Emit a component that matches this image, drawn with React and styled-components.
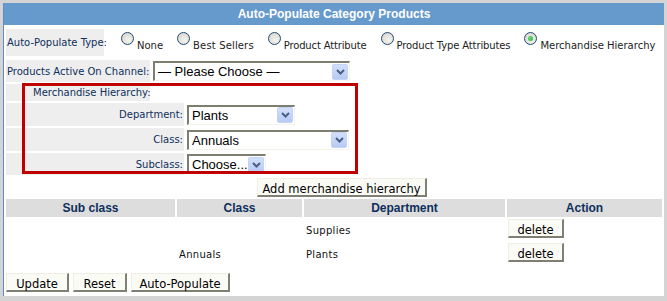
import React from "react";
import styled, { createGlobalStyle } from "styled-components";

const Global = createGlobalStyle`
  html, body { margin: 0; padding: 0; background: #d4d4d4; }
  body { font-family: "DejaVu Sans", Verdana, sans-serif; }
`;

const Panel = styled.div`
  margin: 3px;
  width: 660px;
  background: #ffffff;
  border-left: 1px solid #5d8cc4;
  padding-bottom: 4px;
`;

const Header = styled.div`
  height: 22px;
  background: #6699cc;
  color: #ffffff;
  font: bold 12px "Liberation Sans", Arial, sans-serif;
  display: flex;
  align-items: center;
  justify-content: center;
`;

const Body = styled.div`
  padding: 4px 2px 0 2px;
  display: flex;
  flex-direction: column;
`;

const Row = styled.div`
  display: flex;
  align-items: stretch;
  height: ${(p) => p.$h}px;
  margin-top: ${(p) => p.$mt || 0}px;
`;

const LabelCell = styled.div`
  width: ${(p) => p.$w}px;
  background: #eeeeee;
  color: #0e2f5c;
  font-size: 10px;
  display: flex;
  align-items: center;
  justify-content: ${(p) => (p.$right ? "flex-end" : "flex-start")};
  padding-left: ${(p) => p.$pl || 1}px;
  padding-right: ${(p) => p.$pr || 0}px;
  box-sizing: border-box;
  white-space: nowrap;
`;

const ControlCell = styled.div`
  display: flex;
  align-items: center;
  padding-left: ${(p) => p.$pl || 0}px;
`;

const RadioGroup = styled.div`
  display: flex;
  align-items: center;
  gap: 14px;
  padding-left: 17px;
`;

const RadioItem = styled.label`
  display: flex;
  align-items: flex-start;
  gap: 3px;
  font-size: 10px;
  letter-spacing: ${(p) => p.$ls || 0}px;
  color: #222;
  white-space: nowrap;
`;

const RadioCircle = styled.span`
  width: 11px;
  height: 11px;
  border-radius: 50%;
  border: 1px solid #1f4a78;
  background: radial-gradient(circle at 60% 65%, #f4f4ee 0%, #dcdcd4 70%, #c8c8c0 100%);
  position: relative;
  margin-top: -2px;
  &::after {
    content: "";
    display: ${(p) => (p.$on ? "block" : "none")};
    position: absolute;
    left: 3px;
    top: 3px;
    width: 5px;
    height: 5px;
    border-radius: 50%;
    background: radial-gradient(circle at 40% 40%, #6fe07a, #1aa52a);
  }
`;

const RadioText = styled.span`
  margin-top: 6px;
`;

const SelectBox = styled.div`
  width: ${(p) => p.$w}px;
  height: ${(p) => p.$h || 20}px;
  box-sizing: border-box;
  border-style: solid;
  border-width: 2px 1px 1px 2px;
  border-color: #7d7d70 #f4f4ec #f4f4ec #7d7d70;
  background: #fff;
  display: flex;
  align-items: center;
  justify-content: space-between;
  padding-left: 3px;
  padding-right: 1px;
  font: 13px "Liberation Sans", Arial, sans-serif;
  color: #000;
`;

const Arrow = styled.span`
  width: 16px;
  height: 16px;
  box-sizing: border-box;
  border: 1px solid #c3d3f5;
  border-radius: 2px;
  background: linear-gradient(#d3e0fb, #b7caf4);
  display: flex;
  align-items: center;
  justify-content: center;
`;

const Chevron = () => (
  <svg width="9" height="6" viewBox="0 0 9 6">
    <path d="M1 1 L4.5 4.5 L8 1" fill="none" stroke="#4a5f86" strokeWidth="2" />
  </svg>
);

const Select = ({ w, h, children }) => (
  <SelectBox $w={w} $h={h}>
    <span>{children}</span>
    <Arrow>
      <Chevron />
    </Arrow>
  </SelectBox>
);

const Hierarchy = styled.div`
  position: relative;
  display: flex;
  flex-direction: column;
  gap: 2px;
  margin-top: 2px;
`;

const Highlight = styled.div`
  position: absolute;
  left: 16px;
  top: -1px;
  width: 336px;
  height: 91px;
  box-sizing: border-box;
  border: 3px solid #c00000;
  pointer-events: none;
`;

const Button = styled.button`
  height: ${(p) => p.$h || 19}px;
  width: ${(p) => p.$w}px;
  box-sizing: border-box;
  padding: 3px 0 0 0;
  background: #fbfbf6;
  border-style: solid;
  border-width: 1px 2px 2px 1px;
  border-color: #eeeee4 #7f7f74 #7f7f74 #eeeee4;
  font: 11.5px "DejaVu Sans", Verdana, sans-serif;
  color: #000;
  display: flex;
  align-items: center;
  justify-content: center;
  white-space: nowrap;
`;

const AddRow = styled.div`
  display: flex;
  padding-left: 251px;
  margin-top: 3px;
`;

const Grid = styled.div`
  display: grid;
  grid-template-columns: 169px 125px 201px 155px;
  column-gap: 2px;
  margin-top: 2px;
`;

const HeadCell = styled.div`
  height: 18px;
  background: #dddddd;
  color: #0e2f5c;
  font: bold 12px "Liberation Sans", Arial, sans-serif;
  display: flex;
  align-items: center;
  justify-content: center;
`;

const DataCell = styled.div`
  height: 24px;
  display: flex;
  align-items: center;
  padding-left: ${(p) => p.$pl ?? 2}px;
  padding-top: ${(p) => (p.$text ? 3 : 0)}px;
  padding-bottom: ${(p) => (p.$text ? 0 : 1)}px;
  box-sizing: border-box;
  font-size: 10px;
  letter-spacing: 0.3px;
  color: #111;
`;

const Footer = styled.div`
  display: flex;
  gap: 4px;
  margin-top: 8px;
`;

const radios = [
  { t: "None" },
  { t: "Best Sellers", ls: 0.15 },
  { t: "Product Attribute", ls: -0.15 },
  { t: "Product Type Attributes", ls: -0.12 },
  { t: "Merchandise Hierarchy", on: true },
];

const rows = [
  { sub: "", cls: "", dep: "Supplies" },
  { sub: "", cls: "Annuals", dep: "Plants" },
];

export default function App() {
  return (
    <>
      <Global />
      <Panel>
        <Header>Auto-Populate Category Products</Header>
        <Body>
          <Row $h={27}>
            <LabelCell $w={98}>Auto-Populate Type:</LabelCell>
            <RadioGroup>
              {radios.map((r) => (
                <RadioItem key={r.t} $ls={r.ls}>
                  <RadioCircle $on={r.on} />
                  <RadioText>{r.t}</RadioText>
                </RadioItem>
              ))}
            </RadioGroup>
          </Row>
          <Row $h={22} $mt={4}>
            <LabelCell $w={144}>Products Active On Channel:</LabelCell>
            <ControlCell $pl={3}>
              <Select w={197} h={20}>— Please Choose —</Select>
            </ControlCell>
          </Row>
          <Hierarchy>
            <Row $h={17}>
              <LabelCell $w={144} $pl={27}>Merchandise Hierarchy:</LabelCell>
            </Row>
            <Row $h={23}>
              <LabelCell $w={178} $right $pr={1}>Department:</LabelCell>
              <ControlCell $pl={3}>
                <Select w={108} h={20}>Plants</Select>
              </ControlCell>
            </Row>
            <Row $h={23}>
              <LabelCell $w={178} $right $pr={1}>Class:</LabelCell>
              <ControlCell $pl={3}>
                <Select w={162} h={20}>Annuals</Select>
              </ControlCell>
            </Row>
            <Row $h={22}>
              <LabelCell $w={178} $right $pr={1}>Subclass:</LabelCell>
              <ControlCell $pl={3}>
                <Select w={79} h={20}>Choose...</Select>
              </ControlCell>
            </Row>
            <Highlight />
          </Hierarchy>
          <AddRow>
            <Button $w={170}>Add merchandise hierarchy</Button>
          </AddRow>
          <Grid>
            <HeadCell>Sub class</HeadCell>
            <HeadCell>Class</HeadCell>
            <HeadCell>Department</HeadCell>
            <HeadCell>Action</HeadCell>
            {rows.map((r, i) => (
              <React.Fragment key={i}>
                <DataCell $text>{r.sub}</DataCell>
                <DataCell $text>{r.cls}</DataCell>
                <DataCell $text>{r.dep}</DataCell>
                <DataCell $pl={1}>
                  <Button $w={56} $h={19}>delete</Button>
                </DataCell>
              </React.Fragment>
            ))}
          </Grid>
          <Footer>
            <Button $w={63}>Update</Button>
            <Button $w={54}>Reset</Button>
            <Button $w={99}>Auto-Populate</Button>
          </Footer>
        </Body>
      </Panel>
    </>
  );
}
